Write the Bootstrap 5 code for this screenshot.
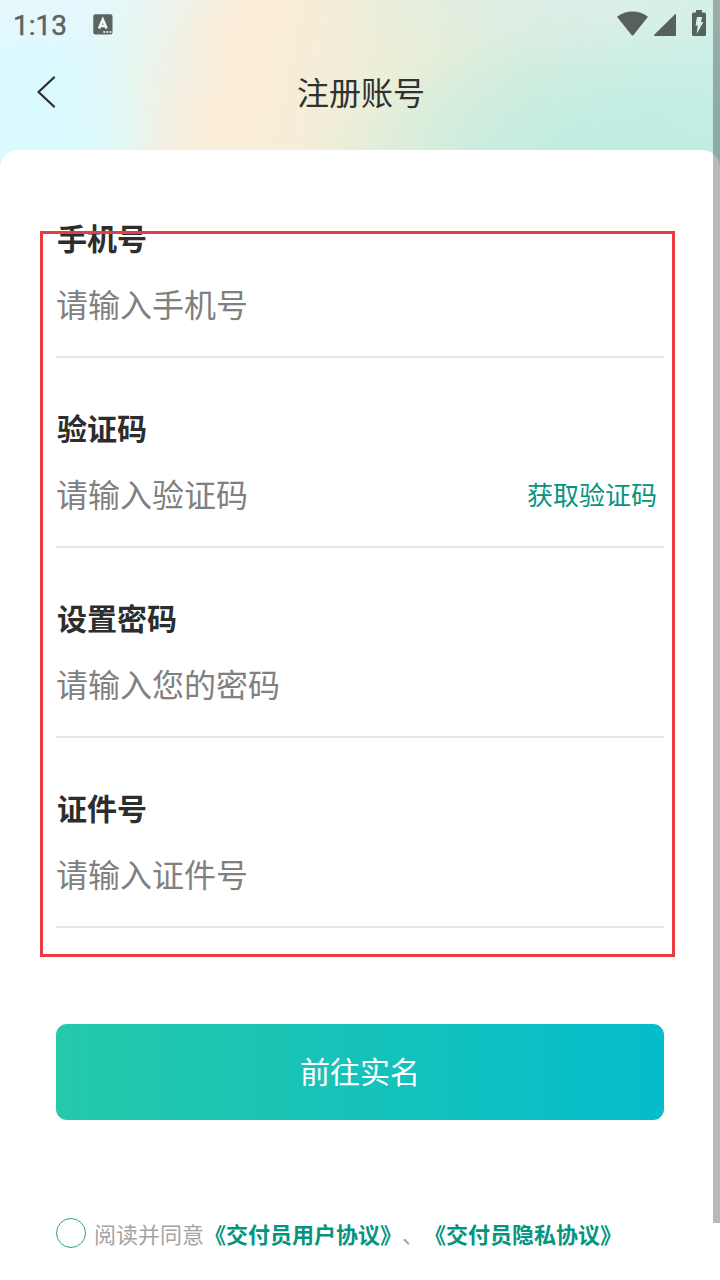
<!DOCTYPE html>
<html lang="zh-CN">
<head>
<meta charset="utf-8">
<meta name="viewport" content="width=device-width, initial-scale=1">
<title>注册账号</title>
<link href="https://cdn.jsdelivr.net/npm/bootstrap@5.3.0/dist/css/bootstrap.min.css" rel="stylesheet">
<style>
  html, body { height: 1280px; overflow: hidden; }
  body { font-family: "Noto Sans CJK SC", sans-serif; color: #2f3133; background: #fff; }
  .screen { width: 720px; height: 1280px;
    background:
      radial-gradient(ellipse 180px 60px at 30px 0, #eef6fbc0 0%, #eef6fb00 100%),
      radial-gradient(ellipse 230px 70px at 550px 0, #dfeeeab0 0%, #dfeeea00 100%),
      radial-gradient(ellipse 160px 130px at 0 150px, #dafaff 0%, #dafaffd0 45%, #dafaff00 100%),
      radial-gradient(ellipse 330px 150px at 650px 165px, #bfece1 0%, #bfece1d0 35%, #c3ede300 100%),
      linear-gradient(102deg, #dbfaff 0, #dcf9ff 80px, #e5f6f0 138px, #f4efe2 195px, #fbedd7 240px, #f9edd7 285px, #f0eed8 360px, #e5eed9 450px, #d9eddd 530px, #d4efe6 620px, #d2f0ea 739px);
    background-size: 720px 170px; background-repeat: no-repeat; }
  .top-area { height: 150px; }
  .status { height: 52px; padding: 0 13px 4px; color: #5a6461; font: 400 28px/48px Roboto, sans-serif; }
  .clock { width: 56px; padding-top: 4px; -webkit-text-stroke: .4px #5a6461; }
  .notice { margin-left: 24px; }
  .titlebar { height: 80px; padding: 0 37px; }
  .page-title { font-size: 32px; line-height: 48px; padding: 0 0 3px 2px; }
  .edge { width: 20px; }
  .sheet { height: 1130px; border-radius: 18px 18px 0 0; padding: 18px 56px 0; }
  .field { height: 190px; padding-top: 49px; border-bottom: 2px solid #e5e5e5; }
  .field-label { font-size: 30px; line-height: 40px; padding-left: 1px; font-weight: 700; color: #2d2d2d; }
  .field-row { height: 91px; }
  .field .form-control { font-size: 32px; line-height: 48px; color: #333; }
  .field .form-control::placeholder { color: #808080; opacity: 1; }
  .code-link { font-size: 26px; color: #069482; margin-right: 7px; padding-top: 2px; }
  .submit { height: 96px; margin-top: 96px; border-radius: 11px; padding-bottom: 3px; font-size: 30px; color: #fff; background: linear-gradient(90deg, #26c9a9, #04bccb); }
  .submit:hover { color: #fff; }
  .agree { margin-top: 97px; height: 32px; font-size: 22px; line-height: 32px; color: #a3a3a3; text-spacing-trim: space-all; }
  .tick { width: 30px; height: 30px; border: 1.5px solid #2ba596; margin-right: 8px; }
  .agree a { color: #069482; font-weight: 700; }
  .marker { left: 40px; top: 231px; width: 635px; height: 726px; border: 3px solid #e83c40; }
  .scroll-thumb { right: 0; top: 0; width: 7px; height: 1223px; background: rgba(0,0,0,.28); }
</style>
</head>
<body>
<div class="screen position-relative overflow-hidden">
  <header class="top-area">
    <div class="status d-flex align-items-center">
      <span class="clock text-nowrap">1:13</span>
      <svg class="notice" width="20" height="21" viewBox="0 0 20 21">
        <rect x=".3" y=".3" width="19.200" height="20.200" rx="2" fill="#5a6461"/>
        <path d="M6 14.500 9.800 5.500l3.800 9M7.200 12h5.200" fill="none" stroke="#f3f8f7" stroke-width="2.600"/>
        <path d="M10.300 18h2m1.100 0h2m1.100 0h2" stroke="#f3f8f7" stroke-width="1.600"/>
      </svg>
      <svg class="ms-auto" width="90" height="28" viewBox="617 10 90 28">
        <g fill="#56605d">
          <path d="M617 16.800C626 9.800 639 9.800 648 16.800L633.500 35q-1 1-2 0z"/>
          <path d="M675 14.200a.6.6 0 0 1 1 .3V35q0 1-1 1h-20.500q-1-.5-.3-1.200z"/>
          <path d="M696 10h6v2.600h2.500q1.500 0 1.500 1.500v20.400q0 1.500-1.500 1.500h-11q-1.500 0-1.500-1.500V14.100q0-1.500 1.500-1.500h2.500z"/>
        </g>
        <path d="M697 17h5.200l-1.200 5h2.400l-6.700 12 1-8.500H695.500z" fill="#d4f0ea"/>
      </svg>
    </div>
    <div class="titlebar d-flex align-items-center justify-content-between">
      <svg class="edge" width="20" height="34" viewBox="0 0 20 34"><path d="M17 2.500 1.500 17 17 31.500" fill="none" stroke="#2d2f32" stroke-width="2.300" stroke-linecap="round" stroke-linejoin="round"/></svg>
      <h1 class="page-title fw-normal m-0">注册账号</h1>
      <span class="edge"></span>
    </div>
  </header>
  <main class="sheet bg-white">
    <form>
      <div class="field">
        <label class="field-label d-block" for="phone">手机号</label>
        <div class="field-row d-flex align-items-center">
          <input id="phone" class="form-control border-0 p-0 shadow-none bg-transparent rounded-0" placeholder="请输入手机号">
        </div>
      </div>
      <div class="field">
        <label class="field-label d-block" for="code">验证码</label>
        <div class="field-row d-flex align-items-center">
          <input id="code" class="form-control border-0 p-0 shadow-none bg-transparent rounded-0" placeholder="请输入验证码">
          <a class="code-link text-nowrap text-decoration-none">获取验证码</a>
        </div>
      </div>
      <div class="field">
        <label class="field-label d-block" for="pwd">设置密码</label>
        <div class="field-row d-flex align-items-center">
          <input id="pwd" type="password" class="form-control border-0 p-0 shadow-none bg-transparent rounded-0" placeholder="请输入您的密码">
        </div>
      </div>
      <div class="field">
        <label class="field-label d-block" for="idno">证件号</label>
        <div class="field-row d-flex align-items-center">
          <input id="idno" class="form-control border-0 p-0 shadow-none bg-transparent rounded-0" placeholder="请输入证件号">
        </div>
      </div>
      <button type="button" class="submit btn w-100 border-0 px-0 pt-0">前往实名</button>
      <div class="agree d-flex align-items-center text-nowrap">
        <span class="tick rounded-circle flex-shrink-0"></span>
        <span>阅读并同意</span>
        <a class="text-decoration-none">《交付员用户协议》</a>
        <span>、</span>
        <a class="text-decoration-none">《交付员隐私协议》</a>
      </div>
    </form>
  </main>
  <div class="marker position-absolute pe-none"></div>
  <div class="scroll-thumb position-absolute"></div>
</div>
<script src="https://cdn.jsdelivr.net/npm/bootstrap@5.3.0/dist/js/bootstrap.bundle.min.js"></script>
</body>
</html>
